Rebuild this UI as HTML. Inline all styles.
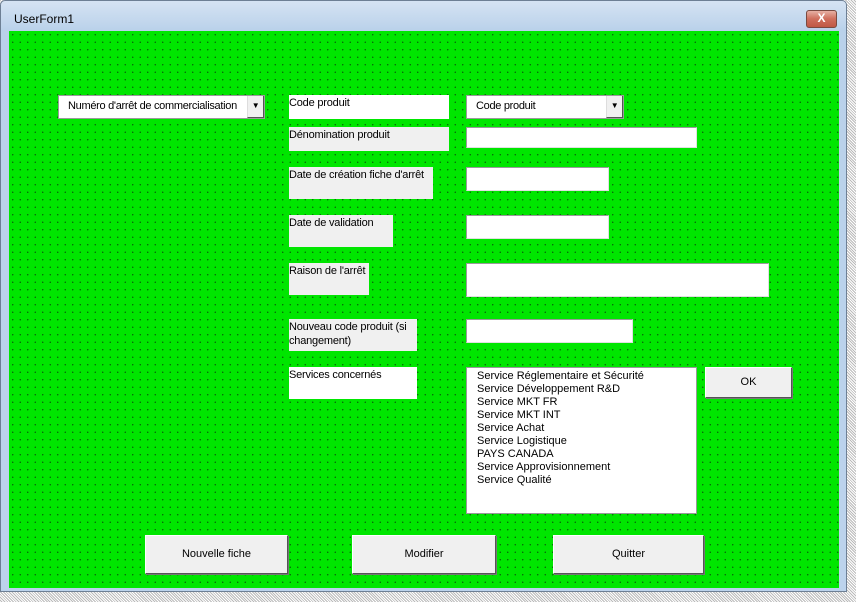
<!DOCTYPE html>
<html><head><meta charset="utf-8"><style>
*{margin:0;padding:0;box-sizing:border-box}
body{width:856px;height:602px;overflow:hidden;position:relative;font-family:"Liberation Sans",sans-serif;font-size:11px;color:#000;
background:repeating-linear-gradient(45deg,#fff 0 1px,#bbb 1px 2px)}
.win{position:absolute;left:0;top:0;width:847px;height:592px;background:linear-gradient(#d5e3f3,#b9d1ea 30px,#bcd3ec);border:1px solid #6d7f94;border-radius:5px 5px 0 0}
.title{position:absolute;left:13px;top:11px;font-size:12px}
.close{position:absolute;left:805px;top:9px;width:31px;height:18px;border:1px solid #7a4a40;border-radius:3px;background:linear-gradient(#e6b0a4,#cf6e5c 50%,#c05844);color:#fff;font-weight:bold;text-align:center;line-height:15px;font-size:12px}
.form{position:absolute;left:9px;top:31px;width:830px;height:557px;background-color:#00e600;
background-image:radial-gradient(circle,#0a5a0a 0.55px,transparent 0.8px);background-size:7.5px 7.5px;background-position:0 0}
.a{position:absolute}
.lbl{background:#f0f0f0;padding:1px 0 0 0;line-height:14px;letter-spacing:-0.2px}
.w{background:#fff}
.tb{background:#fff;border:1px solid #9a9a9a;border-bottom-color:#e0e0e0;border-right-color:#e0e0e0}
.cb{background:#fff;border:1px solid #9a9a9a;padding:4px 0 0 9px;letter-spacing:-0.3px;white-space:nowrap;overflow:hidden}
.dd{position:absolute;right:0;top:0;bottom:0;width:17px;background:#f0f0f0;border-left:1px solid #ddd;border-right:1px solid #555;border-bottom:1px solid #555;text-align:center;font-size:8px;line-height:20px}
.btn{background:#f0f0f0;border:1px solid #fff;border-right-color:#555;border-bottom-color:#555;box-shadow:1px 1px 0 #777;text-align:center;font-size:11px}
.list{background:#fff;border:1px solid #999;padding:2px 0 0 10px;line-height:13px}
</style></head><body>
<div class="win">
<div class="title">UserForm1</div>
<div class="close">X</div>
</div>
<div class="form"></div>
<div class="a cb" style="left:58px;top:95px;width:207px;height:24px">Numéro d'arrêt de commercialisation<div class="dd">▼</div></div>
<div class="a lbl w" style="left:289px;top:95px;width:160px;height:24px">Code produit</div>
<div class="a cb" style="left:466px;top:95px;width:158px;height:24px">Code produit<div class="dd">▼</div></div>
<div class="a lbl" style="left:289px;top:127px;width:160px;height:24px">Dénomination produit</div>
<div class="a tb" style="left:466px;top:127px;width:231px;height:21px"></div>
<div class="a lbl" style="left:289px;top:167px;width:144px;height:32px">Date de création fiche d'arrêt</div>
<div class="a tb" style="left:466px;top:167px;width:143px;height:24px"></div>
<div class="a lbl" style="left:289px;top:215px;width:104px;height:32px">Date de validation</div>
<div class="a tb" style="left:466px;top:215px;width:143px;height:24px"></div>
<div class="a lbl" style="left:289px;top:263px;width:80px;height:32px">Raison de l'arrêt</div>
<div class="a tb" style="left:466px;top:263px;width:303px;height:34px"></div>
<div class="a lbl" style="left:289px;top:319px;width:128px;height:32px">Nouveau code produit (si changement)</div>
<div class="a tb" style="left:466px;top:319px;width:167px;height:24px"></div>
<div class="a lbl w" style="left:289px;top:367px;width:128px;height:32px">Services concernés</div>
<div class="a list" style="left:466px;top:367px;width:231px;height:147px">Service Réglementaire et Sécurité<br>Service Développement R&amp;D<br>Service MKT FR<br>Service MKT INT<br>Service Achat<br>Service Logistique<br>PAYS CANADA<br>Service Approvisionnement<br>Service Qualité</div>
<div class="a btn" style="left:705px;top:367px;width:87px;height:31px;line-height:29px">OK</div>
<div class="a btn" style="left:145px;top:535px;width:143px;height:39px;line-height:37px">Nouvelle fiche</div>
<div class="a btn" style="left:352px;top:535px;width:144px;height:39px;line-height:37px">Modifier</div>
<div class="a btn" style="left:553px;top:535px;width:151px;height:39px;line-height:37px">Quitter</div>
</body></html>
